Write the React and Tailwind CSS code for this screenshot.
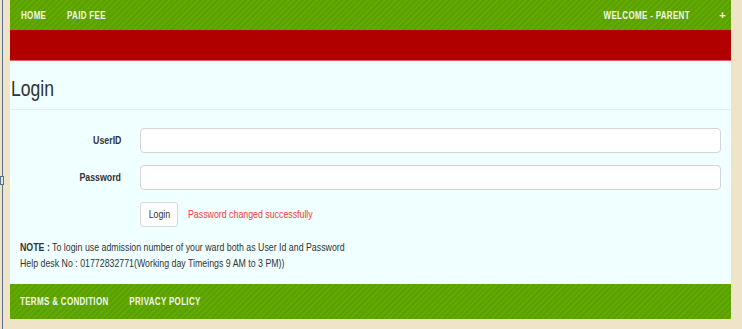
export default function App() {
  const stripe =
    'bg-[repeating-linear-gradient(135deg,#62a900_0px,#62a900_2px,#5aa000_2px,#5aa000_4px)]';
  // the capture is squeezed sideways, so text is narrowed to match
  const squeeze = 'inline-block scale-x-[0.8]';

  return (
    <div className="relative h-[329px] w-[742px] overflow-hidden bg-[#efe3c8] font-['Liberation_Sans',Arial,sans-serif]">
      <div className="absolute left-[2px] top-0 h-full w-[1px] bg-[#5b6f8f]" />
      <div className="absolute left-0 top-[176px] h-[9px] w-[4px] border border-[#5b6f8f] bg-[#d6ecf5]" />

      <div className="ml-[10px] w-[721px]">
        <nav className={`flex h-[30px] items-center ${stripe} pl-[11px] pr-[7px] text-[10px] font-bold tracking-[0.4px] text-[#f2f6ee]`}>
          <a className={`${squeeze} origin-left`}>HOME</a>
          <a className={`${squeeze} origin-left ml-[14px]`}>PAID FEE</a>
          <div className="flex-1" />
          <a className={`${squeeze} origin-right mr-[29px]`}>WELCOME - PARENT</a>
          <a className="mr-[-2px] text-[11px]">+</a>
        </nav>
        <div className="h-[31px] border-b border-[#e06060] bg-[#b10000]" />

        <main className="h-[223px] bg-[#f0ffff]">
          <h1 className="h-[49px] border-b border-[#e6eeee] pl-[1px] pt-[14px] text-[22px] leading-[28px] text-[#333]">
            <span className={`${squeeze} origin-left`}>Login</span>
          </h1>
          <div className="mt-[18px] grid grid-cols-[111px_1fr] gap-x-[19px] gap-y-[12px] pr-[10px]">
            <label className="self-center text-right text-[11px] font-bold text-[#333]">
              <span className={`${squeeze} origin-right`}>UserID</span>
            </label>
            <input className="h-[25px] rounded-[4px] border border-[#d4d4d4] bg-white" />
            <label className="self-center text-right text-[11px] font-bold text-[#333]">
              <span className={`${squeeze} origin-right`}>Password</span>
            </label>
            <input type="password" className="h-[25px] rounded-[4px] border border-[#d4d4d4] bg-white" />
            <div />
            <div className="flex items-center">
              <button className="h-[25px] w-[38px] rounded-[3px] border border-[#d8d8d8] bg-white text-[11px] text-[#333]">
                <span className={squeeze}>Login</span>
              </button>
              <span className={`${squeeze} origin-left ml-[10px] text-[11px] text-[#f33a3a]`}>
                Password changed successfully
              </span>
            </div>
          </div>
          <div className="mt-[12px] pl-[10px] text-[11px] leading-[16px] text-[#333]">
            <div className={`${squeeze} origin-left whitespace-nowrap`}>
              <p>
                <b>NOTE :</b> To login use admission number of your ward both as User Id and Password
              </p>
              <p>Help desk No : 01772832771(Working day Timeings 9 AM to 3 PM))</p>
            </div>
          </div>
        </main>

        <footer className={`flex h-[35px] items-center ${stripe} pl-[10px] text-[10px] font-bold tracking-[0.4px] text-[#f2f6ee]`}>
          <div className={`${squeeze} origin-left whitespace-nowrap`}>
            <a>TERMS &amp; CONDITION</a>
            <a className="ml-[26px]">PRIVACY POLICY</a>
          </div>
        </footer>
      </div>
    </div>
  );
}
